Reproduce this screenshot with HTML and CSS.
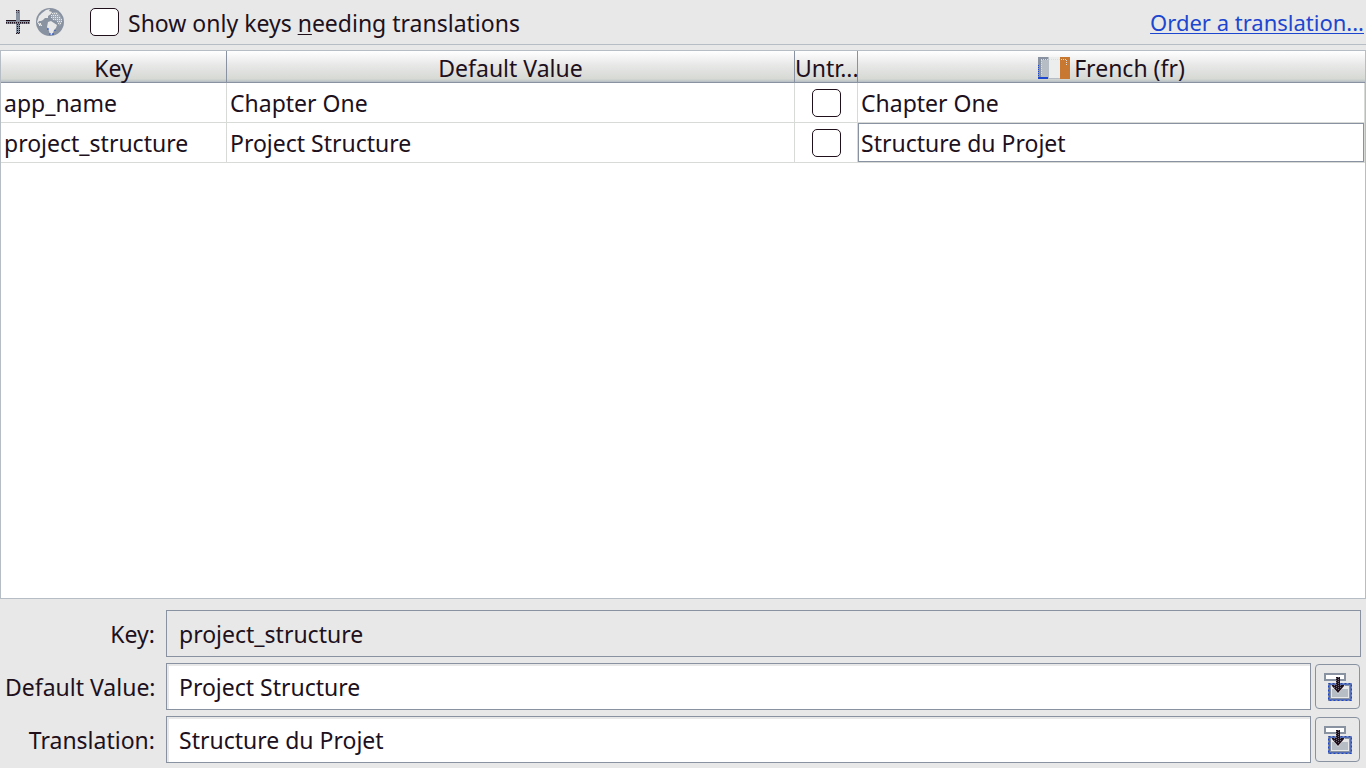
FILE: index.html
```
<!DOCTYPE html>
<html lang="en">

<head>
    <meta charset="UTF-8">
    <title>Translations Editor</title>
    <link rel="stylesheet" href="styles.css">
</head>

<body>

    <div class="toolbar">
        <button type="button" class="tool" aria-label="Add key">
            <svg width="24" height="24" viewBox="0 0 24 24">
                <path d="M10 0h4v24h-4z" fill="#8892a0" />
                <path d="M0 10h24v4H0z" fill="#8892a0" />
                <path d="M0 10.500h10M14 10.500h10" stroke="#20101c" />
                <path d="M0 12.500h24M10 .5h4M10 23.500h4M11.500 14v9M13.500 14v9" stroke="#20101c" stroke-dasharray="1 1" />
                <path d="M0 13.500h24M10 2.500h4" stroke="#4c4a58" stroke-dasharray="1 1" />
            </svg>
        </button>
        <button type="button" class="tool" aria-label="Add locale">
            <svg width="28" height="28" viewBox="0 0 28 28">
                <circle cx="14" cy="14" r="14" fill="#8892a0" />
                <path d="M3 8l3-3 4-3 4-1-1 2 3 1-1 2-3 2 0 2-3 0-2 2-2 1-2 0-1 2 3 1 1 2-3-1-2-3z" fill="#e8e8e8" />
                <path d="M12 14l3-1 3 2 3 2-1 3-2 2-1 3-2 2-1 0-1-4-2-4z" fill="#e8e8e8" />
                <path d="M17 4l4 0 3 3 2 4 0 3-2 4-2-2-1-3-4-1-2-3z" fill="#a2abb6" />
                <path d="M16 5.500h6M15 7.500h8M15 9.500h10M17 11.500h9M21 13.500h5M22 15.500h3" stroke="#e8e8e8" stroke-dasharray="1 1" />
                <path d="M2 15.500h4M3 17.500h4" stroke="#e8e8e8" stroke-dasharray="1 1" />
                <path d="M12 20v2M14 25v2M17 25v2M19 22v1" stroke="#1c46d0" />
            </svg>
        </button>
        <label class="filter">
            <input type="checkbox" class="check">
            <span class="filter_text">Show only keys <u>n</u>eeding translations</span>
        </label>
        <a href="#" class="order">Order a translation...</a>
    </div>

    <div class="table_area">
        <table>
            <colgroup>
                <col class="col_key">
                <col class="col_default">
                <col class="col_untranslatable">
                <col>
            </colgroup>
            <thead>
                <tr>
                    <th>Key</th>
                    <th>Default Value</th>
                    <th>Untr...</th>
                    <th>
                        <span class="locale">
                            <svg width="32" height="22" viewBox="0 0 32 22">
                                <path d="M0 0h11v22H0z" fill="#b6bdc4" />
                                <path d="M11 0h11v22H11z" fill="#eceded" />
                                <path d="M22 0h10v22H22z" fill="#c87830" />
                                <path d="M0 1.500h10M1.500 0v20" stroke="#8892a0" stroke-width="3" />
                                <path d="M11 21.500h11" stroke="#b6bdc4" />
                                <path d="M0 21h10" stroke="#1c46d0" stroke-width="2" />
                                <path d="M.5 8v12" stroke="#1c46d0" stroke-dasharray="1 1" />
                                <path d="M3 2.500h26M3.500 3v16M28.500 3v5" stroke="#e0dcd6" stroke-dasharray="1 1" />
                            </svg>
                            French (fr)
                        </span>
                    </th>
                </tr>
            </thead>
            <tbody>
                <tr>
                    <td>app_name</td>
                    <td>Chapter One</td>
                    <td class="center"><input type="checkbox" class="check" aria-label="app_name untranslatable"></td>
                    <td>Chapter One</td>
                </tr>
                <tr>
                    <td>project_structure</td>
                    <td>Project Structure</td>
                    <td class="center"><input type="checkbox" class="check" aria-label="project_structure untranslatable"></td>
                    <td class="selected">Structure du Projet</td>
                </tr>
            </tbody>
        </table>
    </div>

    <form class="details">
        <label for="key">Key:</label>
        <input type="text" id="key" class="wide" value="project_structure" readonly>

        <label for="default_value">Default Value:</label>
        <input type="text" id="default_value" value="Project Structure">
        <button type="button" class="expand" aria-label="Edit default value">
            <svg width="28" height="28" viewBox="0 0 28 28">
                <path d="M1 1h20v6H1z" fill="#fff" stroke="#8892a0" stroke-width="2" />
                <path d="M4 10h24v18H4z" fill="#8892a0" />
                <path d="M4.500 10.500h23v17h-23z" fill="none" stroke="#1c46d0" stroke-dasharray="2 2" />
                <path d="M5.500 11.500h21v15h-21z" fill="none" stroke="#1c46d0" stroke-dasharray="1 1" />
                <path d="M7 13h18v12H7z" fill="#e8e8e8" />
                <path d="M8 16h16v8H8z" fill="#b6bdc4" />
                <path d="M7 12h14l-7 9z" fill="#e8e8e8" />
                <path d="M12 4h4v8h4v1l-6 7-6-7v-1h4z" fill="#20101c" />
                <path d="M10.500 12v3M12.500 5v12M14.500 4v14M16.500 12v4" stroke="#6c6874" stroke-dasharray="1 1" />
            </svg>
        </button>

        <label for="translation">Translation:</label>
        <input type="text" id="translation" value="Structure du Projet">
        <button type="button" class="expand" aria-label="Edit translation">
            <svg width="28" height="28" viewBox="0 0 28 28">
                <path d="M1 1h20v6H1z" fill="#fff" stroke="#8892a0" stroke-width="2" />
                <path d="M4 10h24v18H4z" fill="#8892a0" />
                <path d="M4.500 10.500h23v17h-23z" fill="none" stroke="#1c46d0" stroke-dasharray="2 2" />
                <path d="M5.500 11.500h21v15h-21z" fill="none" stroke="#1c46d0" stroke-dasharray="1 1" />
                <path d="M7 13h18v12H7z" fill="#e8e8e8" />
                <path d="M8 16h16v8H8z" fill="#b6bdc4" />
                <path d="M7 12h14l-7 9z" fill="#e8e8e8" />
                <path d="M12 4h4v8h4v1l-6 7-6-7v-1h4z" fill="#20101c" />
                <path d="M10.500 12v3M12.500 5v12M14.500 4v14M16.500 12v4" stroke="#6c6874" stroke-dasharray="1 1" />
            </svg>
        </button>
    </form>

</body>

</html>
```
FILE: styles.css
```
* {
    margin: 0;
    padding: 0;
    box-sizing: border-box;
}

body {
    display: flex;
    flex-direction: column;
    min-height: 100vh;
    background: #e8e8e8;
    color: #20101c;
    font-family: 'Noto Sans', sans-serif;
    font-size: 23px;
    line-height: 32px;
}

input,
button {
    font: inherit;
    color: inherit;
}

svg {
    display: block;
}

/* toolbar */
.toolbar {
    display: flex;
    align-items: center;
    height: 45px;
    padding: 0 2px 0 6px;
    border-bottom: 1px solid #b6bdc4;
}

.tool {
    margin-right: 6px;
    border: 0;
    background: none;
}

.filter {
    display: flex;
    align-items: center;
    gap: 9px;
    margin-left: 20px;
}

.filter_text {
    padding-top: 2px;
}

.check {
    display: block;
    appearance: none;
    width: 29px;
    height: 28px;
    border: 1px solid #20101c;
    border-radius: 5px;
    background: #fff;
}

.check:checked {
    background: #8892a0;
}

u,
.order {
    text-decoration-thickness: 1px;
    text-underline-offset: 2px;
}

.order {
    margin-left: auto;
    color: #1c46d0;
    font-size: 22px;
}

/* keys table */
.table_area {
    flex: 1;
    margin-top: 5px;
    border: 1px solid #b6bdc4;
    background: #fff;
}

table {
    width: 100%;
    table-layout: fixed;
    border-collapse: separate;
    border-spacing: 0;
}

.col_key {
    width: 226px;
}

.col_default {
    width: 568px;
}

.col_untranslatable {
    width: 63px;
}

th {
    height: 32px;
    padding-top: 3px;
    line-height: 28px;
    border-right: 1px solid #8892a0;
    border-bottom: 1px solid #8892a0;
    background: linear-gradient(#fff, #e8e8e8 45%, #d6d9d4 90%, #b6bdc4);
    font-weight: normal;
    white-space: nowrap;
}

td {
    height: 40px;
    padding: 0 3px;
    border-right: 1px solid #d8dad8;
    border-bottom: 1px solid #d8dad8;
    white-space: nowrap;
}

th:last-child {
    border-right: 0;
}

.center .check {
    margin: 0 auto;
}

.selected {
    box-shadow: inset 0 0 0 1px #8892a0;
}

.locale {
    display: flex;
    align-items: center;
    justify-content: center;
    gap: 4px;
}

/* details form */
.details {
    display: grid;
    grid-template-columns: 150px 1fr 45px;
    align-items: center;
    gap: 6px 4px;
    padding: 11px 6px 5px 5px;
}

.details label {
    text-align: right;
    white-space: nowrap;
}

.details input {
    min-width: 0;
    height: 47px;
    margin-left: 7px;
    padding: 0 12px;
    border: 1px solid #8892a0;
    outline: 0;
    background: #fff;
    box-shadow: inset 2px 2px #e8e8e8;
}

.details .wide {
    grid-column: 2 / 4;
    margin-right: -1px;
    background: #e8e8e8;
}

.expand {
    display: flex;
    align-items: center;
    justify-content: center;
    height: 45px;
    border: 1px solid #8892a0;
    border-radius: 4px;
    background: #e8e8e8;
}

.expand:hover,
.tool:hover {
    background: #dcdfe2;
}
```
